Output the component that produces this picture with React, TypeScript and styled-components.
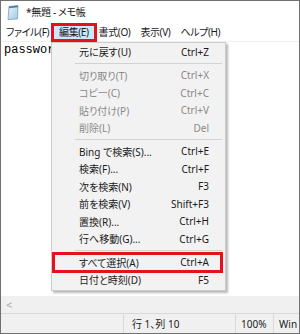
import styled, { createGlobalStyle } from 'styled-components'

const GlobalStyle = createGlobalStyle`
  html, body {
    margin: 0;
    padding: 0;
    background: #ffffff;
  }
  body {
    font-family: "Noto Sans", "Noto Sans CJK JP", sans-serif;
    font-feature-settings: "palt";
  }
`

const colors = {
  border: '#707070',
  text: '#1a1a1a',
  dim: '#8a8a8a',
  menuBg: '#f2f2f2',
  menuBorder: '#cccccc',
  separator: '#d2d2d2',
  hover: '#cce8ff',
  red: '#e5121b',
  bar: '#f0f0f0',
  barLine: '#d9d9d9',
}

const Window = styled.div`
  position: relative;
  width: 300px;
  height: 334px;
  box-sizing: border-box;
  border: 1px solid ${colors.border};
  display: flex;
  flex-direction: column;
  background: #ffffff;
  overflow: hidden;
  font-size: 10px;
  color: ${colors.text};
`

const TitleBar = styled.div`
  height: 22px;
  display: flex;
  align-items: center;
  gap: 7px;
  padding-left: 6px;
  flex-shrink: 0;
`

const TitleText = styled.span`
  font-size: 10px;
  line-height: 12px;
  letter-spacing: -0.3px;
  color: #1a1a1a;
`

const MenuBar = styled.div`
  height: 19px;
  display: flex;
  align-items: center;
  flex-shrink: 0;
  border-bottom: 1px solid #f0f0f0;
  box-sizing: border-box;
  letter-spacing: -0.4px;
`

const MenuBarItem = styled.div<{ $active?: boolean }>`
  height: 13px;
  line-height: 13px;
  padding: 0 5px;
  white-space: nowrap;
  background: ${({ $active }) => ($active ? colors.hover : 'transparent')};
  outline: ${({ $active }) => ($active ? `3px solid ${colors.red}` : 'none')};
`

const Editor = styled.div`
  flex: 1;
  font-family: "Liberation Mono", monospace;
  font-size: 12px;
  line-height: 16px;
  padding-left: 3px;
  color: #000000;
`

const Dropdown = styled.div`
  position: absolute;
  left: 50px;
  top: 41px;
  width: 175px;
  box-sizing: border-box;
  background: ${colors.menuBg};
  border: 1px solid ${colors.menuBorder};
  box-shadow: 2px 2px 2px rgba(0, 0, 0, 0.28);
  padding: 0 0 1px;
`

const Item = styled.div<{ $dim?: boolean; $marked?: boolean }>`
  position: relative;
  height: 17.5px;
  display: grid;
  grid-template-columns: 1fr auto;
  align-items: center;
  padding: 0 16px 0 27px;
  white-space: nowrap;
  color: ${({ $dim }) => ($dim ? colors.dim : colors.text)};

  &::after {
    content: '';
    display: ${({ $marked }) => ($marked ? 'block' : 'none')};
    position: absolute;
    left: 0;
    right: 2px;
    top: -2px;
    bottom: -2px;
    border: 3px solid ${colors.red};
  }
`

const Separator = styled.div`
  height: 6px;
  display: flex;
  align-items: center;
  padding: 0 3px 0 23px;

  &::before {
    content: '';
    flex: 1;
    height: 1px;
    background: ${colors.separator};
  }
`

const ScrollBar = styled.div`
  height: 17px;
  flex-shrink: 0;
  background: ${colors.bar};
  display: flex;
  align-items: center;
  padding-left: 5px;
  color: #a6a6a6;
  font-size: 11px;
`

const StatusBar = styled.div`
  height: 20px;
  flex-shrink: 0;
  box-sizing: border-box;
  background: ${colors.bar};
  border-top: 1px solid ${colors.barLine};
  display: grid;
  grid-template-columns: 122px 112px 38px 1fr;
`

const StatusCell = styled.div<{ $pad: number }>`
  display: flex;
  align-items: center;
  padding-left: ${({ $pad }) => $pad}px;
  white-space: nowrap;
  overflow: hidden;
  & + & {
    border-left: 1px solid ${colors.barLine};
  }
`

function NotepadIcon() {
  return (
    <svg width="12" height="15" viewBox="0 0 12 15">
      <defs>
        <linearGradient id="pad" x1="0" y1="0" x2="1" y2="1">
          <stop offset="0" stopColor="#e8f4fb" />
          <stop offset="1" stopColor="#9fcbe6" />
        </linearGradient>
      </defs>
      <path d="M2 1.5 L11 0.5 L10.5 14 L1 14.5 Z" fill="url(#pad)" stroke="#7f9bb0" strokeWidth="0.8" />
      <path d="M2 1.5 L11 0.5 L11 2.2 L2 3.2 Z" fill="#4f7fa6" />
    </svg>
  )
}

type MenuEntry =
  | { kind: 'sep' }
  | { kind: 'item'; label: string; key: string; dim?: boolean; marked?: boolean }

const entries: MenuEntry[] = [
  { kind: 'item', label: '元に戻す(U)', key: 'Ctrl+Z' },
  { kind: 'sep' },
  { kind: 'item', label: '切り取り(T)', key: 'Ctrl+X', dim: true },
  { kind: 'item', label: 'コピー(C)', key: 'Ctrl+C', dim: true },
  { kind: 'item', label: '貼り付け(P)', key: 'Ctrl+V', dim: true },
  { kind: 'item', label: '削除(L)', key: 'Del', dim: true },
  { kind: 'sep' },
  { kind: 'item', label: 'Bing で検索(S)...', key: 'Ctrl+E' },
  { kind: 'item', label: '検索(F)...', key: 'Ctrl+F' },
  { kind: 'item', label: '次を検索(N)', key: 'F3' },
  { kind: 'item', label: '前を検索(V)', key: 'Shift+F3' },
  { kind: 'item', label: '置換(R)...', key: 'Ctrl+H' },
  { kind: 'item', label: '行へ移動(G)...', key: 'Ctrl+G' },
  { kind: 'sep' },
  { kind: 'item', label: 'すべて選択(A)', key: 'Ctrl+A', marked: true },
  { kind: 'item', label: '日付と時刻(D)', key: 'F5' },
]

const menus = ['ファイル(F)', '編集(E)', '書式(O)', '表示(V)', 'ヘルプ(H)']

export default function App() {
  return (
    <>
      <GlobalStyle />
      <Window>
        <TitleBar>
          <NotepadIcon />
          <TitleText>*無題 - メモ帳</TitleText>
        </TitleBar>
        <MenuBar>
          {menus.map((m) => (
            <MenuBarItem key={m} $active={m === '編集(E)'}>
              {m}
            </MenuBarItem>
          ))}
        </MenuBar>
        <Editor>password</Editor>
        <ScrollBar>&lt;</ScrollBar>
        <StatusBar>
          <StatusCell $pad={0} />
          <StatusCell $pad={8}>行 1、列 10</StatusCell>
          <StatusCell $pad={5}>100%</StatusCell>
          <StatusCell $pad={5}>Win</StatusCell>
        </StatusBar>
        <Dropdown>
          {entries.map((e, i) =>
            e.kind === 'sep' ? (
              <Separator key={i} />
            ) : (
              <Item key={i} $dim={e.dim} $marked={e.marked}>
                <span>{e.label}</span>
                <span>{e.key}</span>
              </Item>
            )
          )}
        </Dropdown>
      </Window>
    </>
  )
}
